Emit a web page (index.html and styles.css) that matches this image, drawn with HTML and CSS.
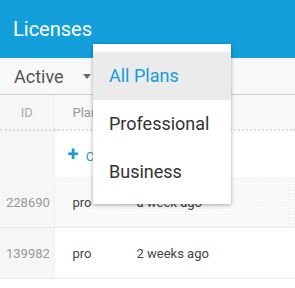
FILE: index.html
```html
<!DOCTYPE html>
<html lang="en">
<head>
    <meta charset="UTF-8">
    <title>Licenses</title>
    <link rel="stylesheet" href="styles.css">
</head>
<body>
    <div class="app-bar">
        <h1>Licenses</h1>
    </div>

    <div class="toolbar">
        <div class="filter">
            <span>Active</span>
            <span class="caret"></span>
        </div>
    </div>

    <table class="licenses">
        <thead>
            <tr>
                <th class="id-col">ID</th>
                <th class="plan-col">Plan</th>
                <th>Created</th>
            </tr>
        </thead>
        <tbody>
            <tr class="create-row">
                <td class="id-col"></td>
                <td colspan="2" class="create"><span class="plus">+</span> Create License</td>
            </tr>
            <tr class="hover">
                <td class="id-col">228690</td>
                <td>pro</td>
                <td>a week ago</td>
            </tr>
            <tr>
                <td class="id-col">139982</td>
                <td>pro</td>
                <td>2 weeks ago</td>
            </tr>
        </tbody>
    </table>

    <ul class="menu">
        <li class="selected">All Plans</li>
        <li>Professional</li>
        <li>Business</li>
    </ul>
</body>
</html>
```

FILE: styles.css
```css
body {
    margin: 0;
    font-family: Roboto, 'Liberation Sans', sans-serif;
    background-color: #ffffff;
    color: #444;
    overflow: hidden;
    position: relative;
}
.app-bar {
    height: 58px;
    background-color: #139fda;
    display: flex;
    align-items: center;
    padding-left: 13px;
}
.app-bar h1 {
    margin: 0;
    font-size: 20px;
    font-weight: normal;
    color: #ffffff;
}
.toolbar {
    height: 36px;
    background-color: #f8f8f8;
    border-bottom: 1px solid #cfcfcf;
    display: flex;
    align-items: center;
    padding-left: 14px;
}
.filter {
    display: flex;
    align-items: center;
    font-size: 18px;
    color: #555;
}
.caret {
    margin-left: 19px;
    width: 0;
    height: 0;
    border-left: 4px solid transparent;
    border-right: 4px solid transparent;
    border-top: 5px solid #666;
}
.licenses {
    width: 100%;
    border-collapse: collapse;
    font-size: 13px;
}
.licenses th {
    height: 34px;
    background-color: #f8f8f8;
    font-weight: normal;
    font-size: 13px;
    color: #999;
    text-align: left;
    padding: 0 0 0 18px;
    border-bottom: 2px dotted #dcdcdc;
}
.licenses th.id-col {
    text-align: center;
    padding: 0;
    color: #aaa;
}
.licenses td {
    height: 50px;
    padding: 0 0 0 18px;
    color: #444;
    border-bottom: 1px solid #ececec;
}
.licenses .id-col {
    width: 54px;
    box-sizing: border-box;
    padding: 0 0 0 6px;
    background-color: #f6f6f6;
    border-right: 1px dotted #e4e4e4;
    color: #999;
    font-size: 13px;
}
.licenses .plan-col {
    width: 46px;
}
.create-row td {
    height: 46px;
    border-bottom: none;
}
.licenses td.create {
    padding-left: 13px;
    color: #139fda;
}
.plus {
    font-size: 20px;
    font-weight: bold;
    margin-right: 4px;
}
.hover td {
    background-color: #fafafa;
    background-image: radial-gradient(#efefef 0.6px, transparent 0.8px);
    background-size: 3px 3px;
}
.hover td.id-col {
    background-image: none;
    background-color: #f6f6f6;
}
.menu {
    position: absolute;
    left: 93px;
    top: 44px;
    width: 138px;
    margin: 0;
    padding: 8px 0;
    list-style: none;
    background-color: #ffffff;
    box-shadow: 0 1px 4px rgba(0, 0, 0, 0.35);
}
.menu li {
    height: 48px;
    line-height: 48px;
    padding-left: 16px;
    font-size: 18px;
    color: #333;
}
.menu li.selected {
    background-color: #ebebeb;
    color: #139fda;
}
```
